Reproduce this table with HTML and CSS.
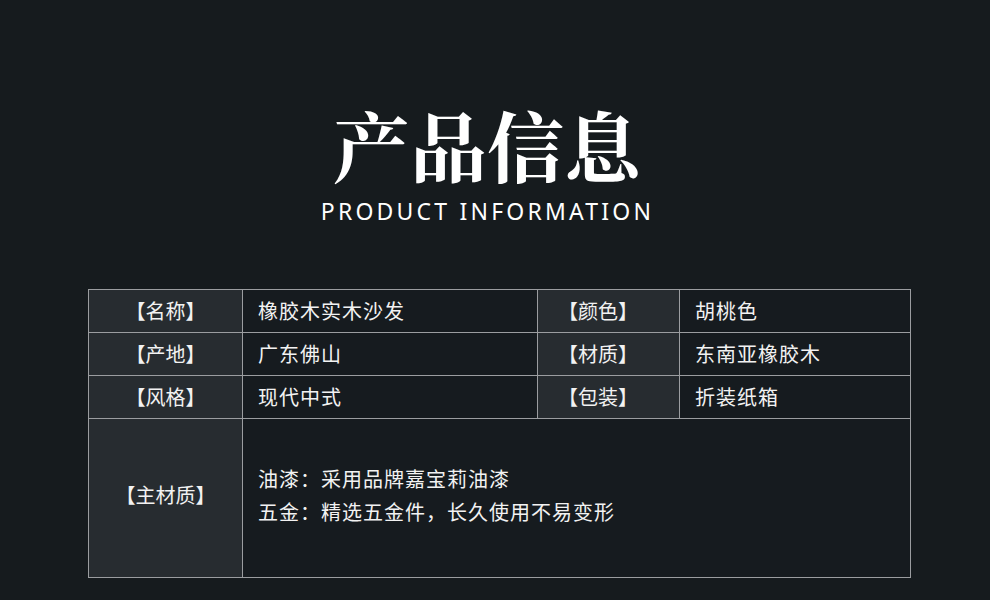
FILE: index.html
```html
<!DOCTYPE html>
<html lang="zh-CN">
<head>
<meta charset="utf-8">
<link rel="stylesheet" href="styles.css">
</head>
<body>
<div class="page">
  <header class="head">
    <h1 class="title">产品信息</h1>
    <div class="subtitle">PRODUCT INFORMATION</div>
  </header>
  <table class="info">
    <colgroup>
      <col class="c1"><col class="c2"><col class="c3"><col class="c4">
    </colgroup>
    <tr class="row">
      <td class="label">【名称】</td><td class="value">橡胶木实木沙发</td>
      <td class="label label-r">【颜色】</td><td class="value">胡桃色</td>
    </tr>
    <tr class="row">
      <td class="label">【产地】</td><td class="value">广东佛山</td>
      <td class="label label-r">【材质】</td><td class="value">东南亚橡胶木</td>
    </tr>
    <tr class="row">
      <td class="label">【风格】</td><td class="value">现代中式</td>
      <td class="label label-r">【包装】</td><td class="value">折装纸箱</td>
    </tr>
    <tr class="row-big">
      <td class="label">【主材质】</td>
      <td class="value multi" colspan="3">
        <div class="line">油漆：采用品牌嘉宝莉油漆</div>
        <div class="line">五金：精选五金件，长久使用不易变形</div>
      </td>
    </tr>
  </table>
</div>
</body>
</html>
```
FILE: styles.css
```css
html, body {
  margin: 0;
  padding: 0;
  background: #161b1e;
}
.page {
  width: 990px;
  height: 600px;
  overflow: hidden;
  background: #161b1e;
  color: #ffffff;
  font-family: "Noto Sans CJK SC", "Noto Sans", sans-serif;
}
.head {
  padding-top: 107px;
  padding-right: 18px;
  display: flex;
  flex-direction: column;
  align-items: center;
}
.title {
  margin: 0;
  font-family: "Noto Serif CJK SC", "Noto Sans CJK SC", serif;
  font-weight: 700;
  font-size: 77px;
  line-height: 74px;
  letter-spacing: 0;
  color: #ffffff;
  padding-left: 2px;
}
.subtitle {
  margin-top: 15px;
  font-family: "Noto Sans", "Open Sans", sans-serif;
  font-size: 23px;
  line-height: 30px;
  letter-spacing: 3.2px;
  color: #ffffff;
  padding-left: 3px;
}
.info {
  margin: 63px 0 0 88px;
  width: 822px;
  border-collapse: collapse;
  table-layout: fixed;
  font-size: 20px;
  color: #f2f2f2;
}
.c1 { width: 154px; }
.c2 { width: 295px; }
.c3 { width: 142px; }
.c4 { width: 231px; }
.info td {
  border: 1px solid #9b9da0;
  padding: 0;
  vertical-align: middle;
  line-height: 28px;
}
.row td { height: 42px; }
.row-big td {
  height: 152px;
  padding-bottom: 6px;
}
.label {
  background: #272c30;
  text-align: center;
}
.label-r {
  text-align: left;
  padding-left: 20px !important;
}
.value {
  background: #161b1f;
  padding-left: 15px !important;
  letter-spacing: 1px;
}
.multi .line {
  line-height: 33px;
}
```
